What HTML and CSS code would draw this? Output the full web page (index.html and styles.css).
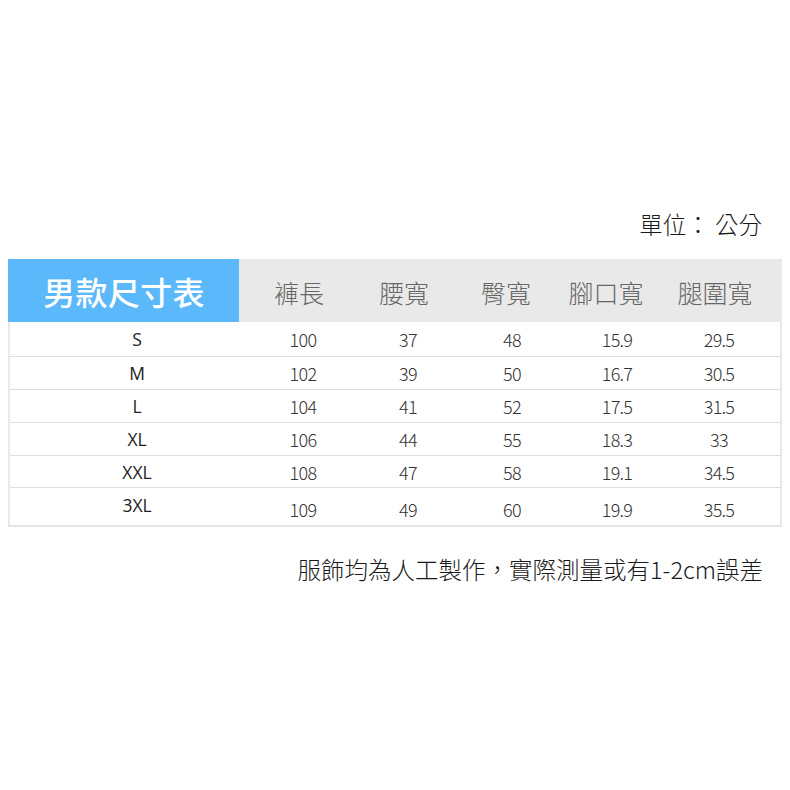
FILE: index.html
```html
<!DOCTYPE html>
<html lang="zh-Hant">
<head>
<meta charset="utf-8">
<link rel="stylesheet" href="styles.css">
</head>
<body>
<div class="page">
  <div class="unit">單位： 公分</div>
  <div class="table">
    <div class="head">
      <div class="title">男款尺寸表</div>
      <div class="h h1">褲長</div>
      <div class="h h2">腰寬</div>
      <div class="h h3">臀寬</div>
      <div class="h h4">腳口寬</div>
      <div class="h h5">腿圍寬</div>
    </div>
    <div class="row r1"><div class="sz">S</div><div>100</div><div>37</div><div>48</div><div>15.9</div><div>29.5</div></div>
    <div class="row r2"><div class="sz">M</div><div>102</div><div>39</div><div>50</div><div>16.7</div><div>30.5</div></div>
    <div class="row r3"><div class="sz">L</div><div>104</div><div>41</div><div>52</div><div>17.5</div><div>31.5</div></div>
    <div class="row r4"><div class="sz">XL</div><div>106</div><div>44</div><div>55</div><div>18.3</div><div>33</div></div>
    <div class="row r5"><div class="sz">XXL</div><div>108</div><div>47</div><div>58</div><div>19.1</div><div>34.5</div></div>
    <div class="row r6 last"><div class="sz">3XL</div><div>109</div><div>49</div><div>60</div><div>19.9</div><div>35.5</div></div>
  </div>
  <div class="note">服飾均為人工製作，實際測量或有1-2cm誤差</div>
</div>
</body>
</html>
```
FILE: styles.css
```css
html, body {
  margin: 0;
  padding: 0;
  background: #ffffff;
}
body {
  font-family: "Noto Sans CJK TC", "Noto Sans", sans-serif;
  color: #222;
}
.page {
  width: 790px;
  height: 790px;
  padding-top: 207px;
  box-sizing: border-box;
}
.unit {
  text-align: right;
  padding-right: 28px;
  font-size: 23.5px;
  font-weight: 300;
  line-height: 34px;
  color: #1a1a1a;
  height: 52px;
}
.table {
  margin: 0 8px;
  width: 774px;
  border-left: 2px solid #e8e8e8;
  border-right: 2px solid #e8e8e8;
  border-bottom: 2px solid #e4e4e4;
  box-sizing: border-box;
}
.head {
  display: grid;
  grid-template-columns: 228px 124px 88px 116px 84px 134px;
  height: 63px;
  background: #e9e9e9;
  margin: 0 -2px;
}
.title {
  background: #5ab8fb;
  color: #fff;
  font-size: 32px;
  font-weight: 500;
  display: flex;
  align-items: center;
  justify-content: center;
  letter-spacing: 0.3px;
  padding-left: 1px;
  width: 230px;
}
.h {
  display: flex;
  align-items: center;
  justify-content: center;
  font-size: 25px;
  font-weight: 300;
  color: #666;
  padding-top: 2px;
}
.h1 { margin-left: 2px; }
.row {
  display: grid;
  grid-template-columns: 254px 78px 132px 76px 134px 70px;
  border-bottom: 1px solid #dedede;
  font-size: 18px;
  color: #333;
  align-items: center;
}
.row > div {
  text-align: center;
  font-weight: 300;
  letter-spacing: -0.7px;
}
.row > .sz {
  font-weight: 400;
  color: #222;
  letter-spacing: 0;
  font-family: "Open Sans", "Noto Sans", sans-serif;
  font-size: 17.5px;
}
.r1 { height: 34px; }
.r2 { height: 32px; }
.r3 { height: 32px; }
.r4 { height: 32px; }
.r5 { height: 31px; }
.r6 { height: 37px; border-bottom: none; }
.r6 > div { padding-top: 4px; }
.r6 > .sz { padding-top: 0; margin-top: -4px; }
.note {
  text-align: right;
  padding-right: 27px;
  margin-top: 26px;
  font-size: 23.5px;
  font-weight: 300;
  color: #1a1a1a;
  line-height: 32px;
}
```
